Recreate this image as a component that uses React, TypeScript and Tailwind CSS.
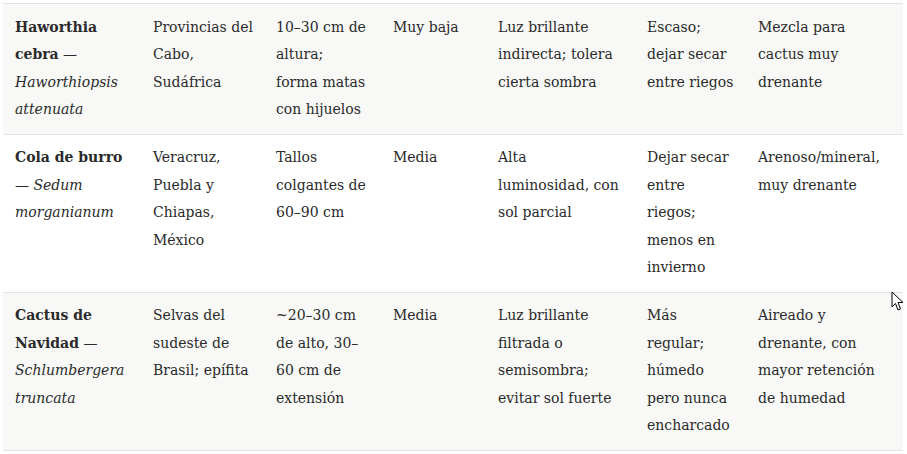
const rows = [
  {
    common: ["Haworthia", "cebra"],
    latin: ["Haworthiopsis", "attenuata"],
    cells: [
      ["Provincias del", "Cabo,", "Sudáfrica"],
      ["10–30 cm de", "altura;", "forma matas", "con hijuelos"],
      ["Muy baja"],
      ["Luz brillante", "indirecta; tolera", "cierta sombra"],
      ["Escaso;", "dejar secar", "entre riegos"],
      ["Mezcla para", "cactus muy", "drenante"],
    ],
  },
  {
    common: ["Cola de burro"],
    latin: ["Sedum", "morganianum"],
    cells: [
      ["Veracruz,", "Puebla y", "Chiapas,", "México"],
      ["Tallos", "colgantes de", "60–90 cm"],
      ["Media"],
      ["Alta", "luminosidad, con", "sol parcial"],
      ["Dejar secar", "entre", "riegos;", "menos en", "invierno"],
      ["Arenoso/mineral,", "muy drenante"],
    ],
  },
  {
    common: ["Cactus de", "Navidad"],
    latin: ["Schlumbergera", "truncata"],
    cells: [
      ["Selvas del", "sudeste de", "Brasil; epífita"],
      ["~20–30 cm", "de alto, 30–", "60 cm de", "extensión"],
      ["Media"],
      ["Luz brillante", "filtrada o", "semisombra;", "evitar sol fuerte"],
      ["Más", "regular;", "húmedo", "pero nunca", "encharcado"],
      ["Aireado y", "drenante, con", "mayor retención", "de humedad"],
    ],
  },
]

function Lines({ lines }: { lines: string[] }) {
  return (
    <>
      {lines.map((l, i) => (
        <span key={i} className="block whitespace-nowrap">
          {l}
        </span>
      ))}
    </>
  )
}

export default function App() {
  return (
    <div className="relative min-h-[454px] w-[907px] bg-white px-[3px] pt-[3px] font-['DejaVu_Serif',serif] text-[14px] leading-[27.5px] text-[#2a2a2a]">
      <table className="w-[900px] table-fixed border-collapse">
        <colgroup>
          <col className="w-[138px]" />
          <col className="w-[123px]" />
          <col className="w-[117px]" />
          <col className="w-[105px]" />
          <col className="w-[149px]" />
          <col className="w-[111px]" />
          <col className="w-[157px]" />
        </colgroup>
        <tbody>
          {rows.map((r, i) => (
            <tr key={r.common[0]} className={`border-y border-[#e3e4e2] ${i % 2 === 0 ? "bg-[#f8f9f7]" : "bg-white"}`}>
              <td className="px-3 pt-[9.5px] pb-[10px] align-top">
                {r.common.length === 2 ? (
                  <>
                    <strong className="block font-bold">{r.common[0]}</strong>
                    <span className="block whitespace-nowrap">
                      <strong className="font-bold">{r.common[1]}</strong> —
                    </span>
                    <em className="block">{r.latin[0]}</em>
                    <em className="block">{r.latin[1]}</em>
                  </>
                ) : (
                  <>
                    <strong className="block font-bold">{r.common[0]}</strong>
                    <span className="block whitespace-nowrap">
                      — <em>{r.latin[0]}</em>
                    </span>
                    <em className="block">{r.latin[1]}</em>
                  </>
                )}
              </td>
              {r.cells.map((c, j) => (
                <td key={j} className="px-3 pt-[9.5px] pb-[10px] align-top">
                  <Lines lines={c} />
                </td>
              ))}
            </tr>
          ))}
        </tbody>
      </table>
      <svg className="absolute left-[891px] top-[291px]" width="13" height="21" viewBox="0 0 13 21">
        <path d="M1 1 L1 16 L4.5 12.5 L7 19 L9.5 18 L7 11.5 L12 11.5 Z" fill="#fff" stroke="#000" strokeWidth="1" strokeLinejoin="round" />
      </svg>
    </div>
  )
}
